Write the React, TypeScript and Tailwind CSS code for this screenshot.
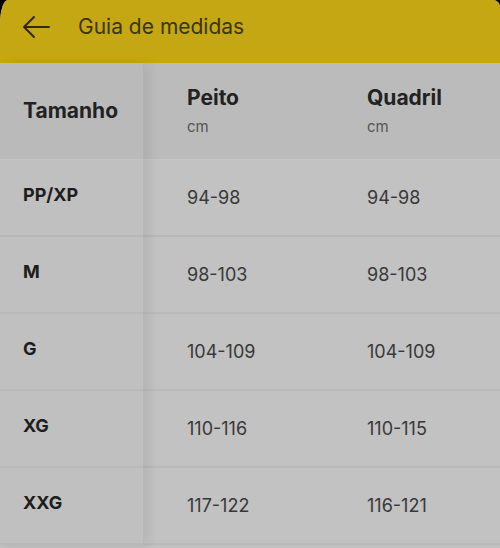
import React from "react";

interface SizeRow {
  size: string;
  peito: string;
  quadril: string;
}

const rows: SizeRow[] = [
  { size: "PP/XP", peito: "94-98", quadril: "94-98" },
  { size: "M", peito: "98-103", quadril: "98-103" },
  { size: "G", peito: "104-109", quadril: "104-109" },
  { size: "XG", peito: "110-116", quadril: "110-115" },
  { size: "XXG", peito: "117-122", quadril: "116-121" },
];

const BackArrow = () => (
  <svg width="30" height="24" viewBox="0 0 30 24" fill="none">
    <path
      d="M28 12H3M13 2L3 12l10 10"
      stroke="#2f2a0c"
      strokeWidth="2"
      strokeLinecap="round"
      strokeLinejoin="round"
    />
  </svg>
);

const App = () => {
  return (
    <div
      className="w-[500px] h-[548px] bg-black overflow-hidden"
      style={{ fontFamily: "Inter, Lato, sans-serif" }}
    >
      <div className="w-full h-full bg-[#c1c1c1] rounded-tl-[8px_24px] rounded-tr-[7px] overflow-hidden">
        {/* header */}
        <div className="h-[63px] bg-[#c4a712] flex items-center pl-[21px] pb-[9px]">
          <button className="w-[30px] h-[24px] flex items-center">
            <BackArrow />
          </button>
          <h1 className="ml-[27px] text-[21px] text-[#3b350f]">Guia de medidas</h1>
        </div>

        {/* table */}
        <div className="flex">
          {/* fixed first column */}
          <div className="w-[143px] shrink-0 relative z-10 shadow-[6px_0_10px_rgba(0,0,0,0.07)]">
            <div className="h-[97px] bg-[#bababa] flex items-center pl-[23px] border-b border-[#c6c6c6]">
              <span className="text-[21px] font-bold text-[#222222]">Tamanho</span>
            </div>
            {rows.map((row) => (
              <div
                key={row.size}
                className="h-[77px] bg-[#c0c0c0] flex items-center pl-[23px] pb-[6px] border-b-2 border-[#b9b9b9]"
              >
                <span className="text-[18px] font-bold text-[#1d1d1d]">{row.size}</span>
              </div>
            ))}
          </div>

          {/* values */}
          <div className="flex-1">
            <div className="h-[97px] bg-[#bbbbbb] flex border-b border-[#c6c6c6]">
              <div className="w-[180px] pl-[44px] flex flex-col justify-center">
                <span className="text-[21px] font-bold text-[#222222] leading-[26px]">Peito</span>
                <span className="text-[15px] text-[#555555] leading-[22px] mt-[5px]">cm</span>
              </div>
              <div className="flex-1 pl-[44px] flex flex-col justify-center">
                <span className="text-[21px] font-bold text-[#222222] leading-[26px]">Quadril</span>
                <span className="text-[15px] text-[#555555] leading-[22px] mt-[5px]">cm</span>
              </div>
            </div>
            {rows.map((row) => (
              <div
                key={row.size}
                className="h-[77px] bg-[#c2c2c2] flex items-center border-b-2 border-[#b9b9b9]"
              >
                <div className="w-[180px] pl-[44px] text-[18px] text-[#383838]">{row.peito}</div>
                <div className="flex-1 pl-[44px] text-[18px] text-[#383838]">{row.quadril}</div>
              </div>
            ))}
          </div>
        </div>
      </div>
    </div>
  );
};

export default App;
